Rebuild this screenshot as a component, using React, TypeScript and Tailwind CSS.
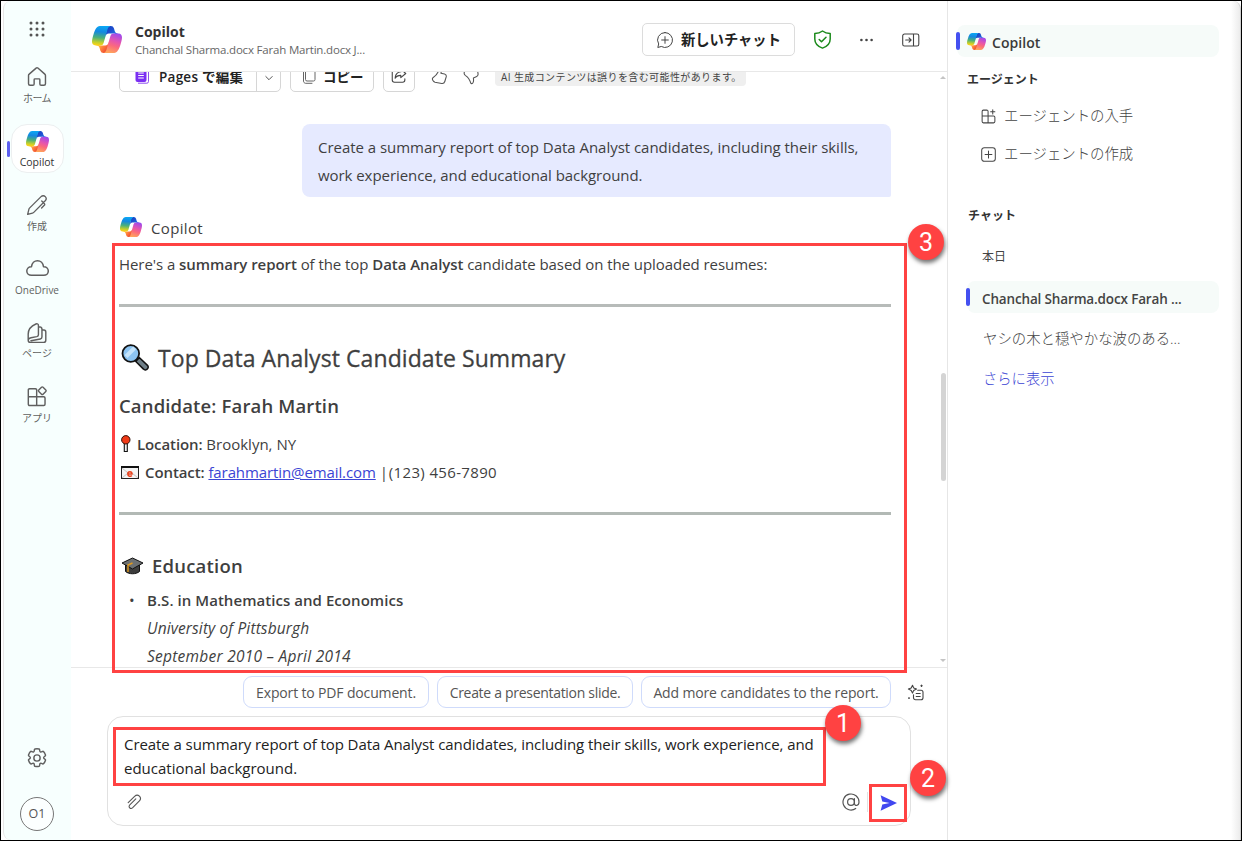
import { useId, type ReactNode } from "react";

function CopilotLogo({ className }: { className: string }) {
  const id = useId();
  return (
    <svg className={className} viewBox="2 4 44 40" preserveAspectRatio="none">
      <defs>
        <linearGradient id={id + "a"} x1="38" y1="18" x2="26" y2="5" gradientUnits="userSpaceOnUse">
          <stop offset="0" stopColor="#1a7fe8" />
          <stop offset="0.6" stopColor="#1f4fd0" />
          <stop offset="1" stopColor="#1647c4" />
        </linearGradient>
        <linearGradient id={id + "b"} x1="10" y1="32" x2="24" y2="43" gradientUnits="userSpaceOnUse">
          <stop offset="0" stopColor="#ffc83d" />
          <stop offset="0.5" stopColor="#ff7a3c" />
          <stop offset="1" stopColor="#e8402f" />
        </linearGradient>
        <linearGradient id={id + "c"} x1="16" y1="4" x2="13" y2="33" gradientUnits="userSpaceOnUse">
          <stop offset="0" stopColor="#0aa8f5" />
          <stop offset="0.3" stopColor="#1488e0" />
          <stop offset="0.6" stopColor="#4bb07a" />
          <stop offset="0.85" stopColor="#c5cf2c" />
          <stop offset="1" stopColor="#ffd314" />
        </linearGradient>
        <linearGradient id={id + "d"} x1="40" y1="15" x2="30" y2="44" gradientUnits="userSpaceOnUse">
          <stop offset="0" stopColor="#9a48f0" />
          <stop offset="0.4" stopColor="#e455b0" />
          <stop offset="0.65" stopColor="#fb6a7c" />
          <stop offset="1" stopColor="#ffa45c" />
        </linearGradient>
      </defs>
      <path fill={`url(#${id}a)`} d="M34.142 7.325A4.63 4.63 0 0 0 29.7 4H28.35a4.63 4.63 0 0 0-4.554 3.794L21.48 20.407l.575-1.965a4.63 4.63 0 0 1 4.444-3.33h7.853l3.294 1.282 3.175-1.283h-.926a4.63 4.63 0 0 1-4.443-3.325z" />
      <path fill={`url(#${id}b)`} d="M14.33 40.656A4.63 4.63 0 0 0 18.779 44h2.87a4.63 4.63 0 0 0 4.629-4.51l.312-12.163-.654 2.233a4.63 4.63 0 0 1-4.443 3.329h-7.919l-2.823-1.531-3.056 1.53h.91a4.63 4.63 0 0 1 4.448 3.344z" />
      <path fill={`url(#${id}c)`} d="M29.5 4H13.46c-4.583 0-7.332 6.057-9.165 12.113C2.123 23.29-.72 32.885 7.503 32.885h6.926a4.63 4.63 0 0 0 4.456-3.36l5.917-20.807C25.6 5.9 27.3 4 29.5 4z" />
      <path fill={`url(#${id}d)`} d="M18.498 44h16.04c4.582 0 7.332-6.058 9.165-12.115 2.171-7.177 5.013-16.775-3.208-16.775h-6.926a4.63 4.63 0 0 0-4.457 3.358l-5.915 20.81C22.4 42.1 20.7 44 18.498 44z" />
    </svg>
  );
}

function Icon({ className, children, box = "0 0 20 20", width = 1 }: { className: string; children: ReactNode; box?: string; width?: number }) {
  return (
    <svg className={className} viewBox={box} fill="none" stroke="currentColor" strokeWidth={width} strokeLinecap="round" strokeLinejoin="round">
      {children}
    </svg>
  );
}

function NavItem({ label, labelClass, children }: { label: string; labelClass: string; children: ReactNode }) {
  return (
    <div className="flex h-16 w-full flex-col items-center text-[#5f5f5f]">
      <div className="flex h-6 items-center justify-center">{children}</div>
      <div className={"flex h-4 items-center whitespace-nowrap " + labelClass}>{label}</div>
    </div>
  );
}

function Sidebar() {
  return (
    <nav className="ml-0.5 flex w-[68px] shrink-0 flex-col items-center rounded-l-lg border-l border-[#e6e6e6] bg-[#f7fffe] pr-px">
      <svg className="mt-5 size-4" viewBox="0 0 16 16" fill="#555">
        {[2, 8, 14].map((y) => [2, 8, 14].map((x) => <circle key={x + "-" + y} cx={x} cy={y} r="1.5" />))}
      </svg>
      <div className="mt-[26px] flex w-full flex-col">
        <NavItem label="ホーム" labelClass="text-[10px] mt-[3px] tracking-[-0.5px]">
          <Icon className="mt-[3px] size-[22px]" width={1.3}>
            <path d="M9.2 1.9a1.2 1.2 0 0 1 1.6 0l6.3 5.5c.4.35.6.8.6 1.3v7.4c0 .8-.6 1.4-1.4 1.4h-2.5c-.7 0-1.2-.5-1.2-1.2v-3.9c0-.4-.3-.7-.7-.7H8.1c-.4 0-.7.3-.7.7v3.9c0 .7-.5 1.2-1.2 1.2H3.7c-.8 0-1.4-.6-1.4-1.4V8.700c0-.5.2-1 .6-1.300z" />
          </Icon>
        </NavItem>
        <div className="relative flex h-16 w-full justify-center">
          <div className="absolute top-[14px] left-[3px] h-4 w-[3px] rounded-sm bg-[#5b5fef]" />
          <div className="-mt-[3px] flex h-[49px] w-[53px] flex-col items-center rounded-2xl border border-[#eceff0] bg-white">
            <CopilotLogo className="mt-[6px] h-[21px] w-[23px]" />
            <div className="mt-px text-[10.5px] leading-[18px] text-[#333]">Copilot</div>
          </div>
        </div>
        <NavItem label="作成" labelClass="text-[10px] mt-[3px]">
          <Icon className="mt-[3px] size-[22px]" width={1.2}>
            <path d="M1.5 18.500l1.100-4.500c.15-.6.4-1 .8-1.400L13.7 2.400c1.100-1.100 2.800-1.100 3.800 0s1.100 2.700 0 3.800L7.300 16.500c-.4.400-.9.700-1.400.8zM14.300 6.300l2.300 2.300c.5.500.5 1.200 0 1.700l-2.400 2.400" />
          </Icon>
        </NavItem>
        <NavItem label="OneDrive" labelClass="text-[10px] mt-[3px]">
          <Icon className="mt-[2px] h-[18px] w-[25px]" box="0 0 24 18" width={1.5}>
            <path d="M6 16.300h12.300c2.500 0 4.500-1.800 4.500-4.300 0-2.400-1.900-4.300-4.400-4.300h-.4C17.600 4.200 15.100 1.700 12 1.700S6.400 4.200 6 7.700h-.3c-2.500 0-4.400 1.900-4.400 4.300 0 2.500 2.100 4.300 4.700 4.300z" />
          </Icon>
        </NavItem>
        <NavItem label="ページ" labelClass="text-[10px] mt-0.5">
          <Icon className="mt-[3px] size-[22px]" width={1.3}>
            <path d="M2 16.500V11C2 7 5 3.500 9 1.800c1.300-.5 2.300.1 2.300 1.400v8.300c0 1-.6 1.600-1.500 1.800l-5.300 1C2.900 14.600 2 15.300 2 16.500c0 1.200.9 2 2 2h12c1.200 0 2-.8 2-2V8.800c0-1.200-1.200-1.700-3.500-1.700M11.300 4.300c2 0 3.200.7 3.200 2v7.300c0 1-.5 1.600-1.500 1.800L4.500 17" />
          </Icon>
        </NavItem>
        <NavItem label="アプリ" labelClass="text-[10px] mt-[3px]">
          <Icon className="mt-[3px] size-[22px]" width={1.3}>
            <path d="M9.700 9.800V3.600c0-.6-.5-1.100-1.100-1.100H3.200c-.6 0-1.100.5-1.100 1.100v6.200zm0 0v8H3.200c-.6 0-1.100-.5-1.100-1.100V9.800zm0 0h6.500c.6 0 1.100.5 1.100 1.100v5.800c0 .6-.5 1.100-1.100 1.100H9.700zM14.100 1.100c.4-.4 1-.4 1.400 0l2.500 2.500c.4.4.4 1 0 1.400l-2.500 2.500c-.4.4-1 .4-1.400 0L11.600 5c-.4-.4-.4-1 0-1.400z" />
          </Icon>
        </NavItem>
      </div>
      <div className="mt-auto mb-[9px] flex flex-col items-center gap-[29px] text-[#5f5f5f]">
        <Icon className="size-5" width={1.5} box="1.5 1.5 21 21">
          <circle cx="12" cy="12" r="3.3" />
          <path d="M12 2.300c.7 0 1.400.1 2.100.25.3.07.5.3.6.600l.2 1.500c.1.800.9 1.300 1.700 1l1.400-.6c.3-.1.600-.05.800.2a9.700 9.700 0 0 1 2.100 3.700c.1.300 0 .6-.2.800l-1.200.9c-.7.500-.7 1.500 0 2l1.200.9c.2.200.3.500.2.800a9.700 9.700 0 0 1-2.100 3.700c-.2.200-.5.300-.8.200l-1.400-.6c-.8-.3-1.600.1-1.700 1l-.2 1.500c0 .3-.3.500-.6.600a9.500 9.500 0 0 1-4.200 0c-.3-.1-.5-.3-.6-.6l-.2-1.500c-.1-.9-.9-1.300-1.700-1l-1.400.6c-.3.100-.6 0-.8-.2a9.700 9.700 0 0 1-2.100-3.700c-.1-.3 0-.6.2-.8l1.200-.9c.7-.5.7-1.500 0-2l-1.200-.9c-.2-.2-.3-.5-.2-.8a9.700 9.700 0 0 1 2.100-3.700c.2-.25.5-.3.8-.2l1.400.6c.8.3 1.600-.2 1.700-1l.2-1.500c.1-.3.3-.5.6-.6.7-.15 1.400-.25 2.100-.25z" />
        </Icon>
        <div className="flex size-[34px] items-center justify-center rounded-full border-[1.5px] border-[#777] bg-white/60 text-[12.5px] text-[#555]">O1</div>
      </div>
    </nav>
  );
}

function Header() {
  return (
    <header className="flex h-[71px] shrink-0 items-center border-b border-[#e8e8e8] pr-[27px] pl-[21px]">
      <CopilotLogo className="mt-[7px] h-[27px] w-[30px]" />
      <div className="mt-[7px] ml-[13px] flex flex-col">
        <div className="text-[14px] leading-5 font-bold text-[#333]">Copilot</div>
        <div className="text-[11.5px] leading-4 tracking-[-0.19px] whitespace-nowrap text-[#666]">Chanchal Sharma.docx Farah Martin.docx J...</div>
      </div>
      <div className="mt-[7px] ml-auto flex items-center">
        <button className="flex h-[33px] w-[153px] items-center rounded-[5px] border border-[#dcdcdc] pl-[13px] text-[#222]">
          <Icon className="size-[18px] text-[#444]" width={1.1}>
            <path d="M10 1.700a8.300 8.300 0 1 1-4.100 15.500L2 18.300l1-3.900A8.300 8.300 0 0 1 10 1.700zM10 6.300v7.400M6.300 10h7.400" />
          </Icon>
          <span className="ml-[7px] text-[14.3px] font-bold whitespace-nowrap">新しいチャット</span>
        </button>
        <Icon className="ml-[18px] size-[19px] text-[#1b8a1b]" width={1.5} box="1 0.5 18 19">
          <path d="M10 1.500c2.200 1.600 4.700 2.400 7.700 2.600v5.300c0 4.300-2.600 7.300-7.700 9.200-5.100-1.900-7.700-4.900-7.700-9.200V4.100C5.300 3.900 7.800 3.100 10 1.500zM6.700 10l2.300 2.300 4.500-4.600" />
        </Icon>
        <svg className="ml-[26px] h-4 w-4" viewBox="0 0 16 16" fill="#444">
          <circle cx="3.400" cy="8" r="1.300" />
          <circle cx="8.500" cy="8" r="1.300" />
          <circle cx="13.600" cy="8" r="1.300" />
        </svg>
        <Icon className="ml-[28px] h-[14px] w-[18px] text-[#444]" box="0 0 18 14" width={1.1}>
          <path d="M2.500 1h12.500c1 0 1.800.8 1.800 1.800v8.400c0 1-.8 1.800-1.800 1.800H2.500c-1 0-1.800-.8-1.800-1.800V2.800C.7 1.800 1.500 1 2.500 1zM11.500 1v12M3.700 7h5.200M7 4.900L9.100 7 7 9.100" />
        </Icon>
      </div>
    </header>
  );
}

function Toolbar() {
  return (
    <div className="-mt-3 flex h-8 items-center text-[#222]">
      <div className="flex h-8 w-[162px] items-stretch rounded-[5px] border border-[#d6d6d6]">
        <div className="flex w-[137px] items-center border-r border-[#d6d6d6] pl-[15px]">
          <svg className="h-[15px] w-[15px]" viewBox="0 0 15 15" fill="none">
            <rect x="0.5" y="0" width="11" height="13" rx="2" fill="#7b2ff2" />
            <path d="M3.200 4h5.600M3.200 6.500h5.600M3.200 9h5.600" stroke="#fff" strokeWidth="1.100" />
            <path d="M13.500 3v9.500a1.700 1.700 0 0 1-1.700 1.700H3" stroke="#8d4df0" strokeWidth="1" />
          </svg>
          <span className="ml-[9px] pt-0.5 text-[13.5px] font-semibold tracking-[0.25px] whitespace-nowrap">Pages で編集</span>
        </div>
        <div className="flex flex-1 items-center justify-center">
          <Icon className="mt-1 h-2 w-2 text-[#555]" box="0 0 8 8"><path d="M.8 2.500L4 5.700l3.200-3.200" /></Icon>
        </div>
      </div>
      <div className="ml-[9px] flex h-8 w-[84px] items-center rounded-[5px] border border-[#d6d6d6] pl-[11px]">
        <Icon className="size-[15px] text-[#666]" box="0 0 15 15"><rect x="3.5" y="0.5" width="9.5" height="11.5" rx="1.5" /><path d="M1.500 3v9c0 1.200.9 2.300 2.200 2.300H10" /></Icon>
        <span className="ml-[6px] pt-0.5 text-[13.5px] font-bold">コピー</span>
      </div>
      <div className="ml-[9px] flex h-8 w-8 items-center justify-center rounded-[5px] border border-[#d6d6d6] text-[#444]">
        <Icon className="size-[18px]" width={1.2}>
          <path d="M8 3.500H5A2.500 2.500 0 0 0 2.500 6v8.500A2.500 2.500 0 0 0 5 17h9a2.500 2.500 0 0 0 2.500-2.500V13M12 2.500l5.500 4.700-5.500 4.700V9.300c-3 0-5 .8-6.300 3.200.3-4.300 2.500-6.700 6.300-7.200z" />
        </Icon>
      </div>
      <Icon className="ml-4 h-[18px] w-[17px] text-[#555]" box="0 0 17 18" width={1.1}>
        <path d="M9.500 1c1.200.5 1.500 1.800 1 3.200L9.900 6.200l3.600.8c1.500.4 2 1.500 1.700 2.900l-1.400 4.600c-.5 1.600-1.500 2.300-3.100 2L4 15.200c-1-.3-1.700-1-2.200-1.900-.6-1.200-.4-2.500.7-3.100C5.500 8.200 7.300 5.500 8 2.200c.2-.9.800-1.400 1.500-1.200z" />
      </Icon>
      <Icon className="ml-[15px] h-[18px] w-[17px] text-[#555]" box="0 0 17 18" width={1.1}>
        <path d="M7.800 16.200c.4.600 1.300.5 1.900 0 1-.9 1-2.900.7-5.200l2.800-1.200c1.300-.5 2-1.400 1.900-2.700l-.5-3.300C14.300 2 13 1.200 11.500 1.500L4 3C2.500 3.300 1.500 4.200 1.200 5.600c-.3 1.300.2 2.200 1.400 3 2.700 1.700 4.100 4.200 5.200 7.600z" />
      </Icon>
      <div className="ml-[15px] flex h-[20px] w-[251px] items-center rounded-[4px] bg-[#efefef] pt-0.5 pl-[6px] text-[10px] tracking-[0.4px] whitespace-nowrap text-[#444]">
        AI 生成コンテンツは誤りを含む可能性があります。
      </div>
    </div>
  );
}

function Conversation() {
  return (
    <section className="relative h-[595px] shrink-0 overflow-hidden pr-[56px] pl-12 text-[15px] text-[#3f3f3f]">
      <Toolbar />
      <div className="mt-8 ml-auto h-[73px] w-[589px] rounded-lg rounded-br-xs bg-[#e6eaff] pt-[9px] pl-4 leading-7 whitespace-nowrap">
        <p className="tracking-[-0.03px]">Create a summary report of top Data Analyst candidates, including their skills,</p>
        <p className="tracking-[-0.06px]">work experience, and educational background.</p>
      </div>
      <div className="mt-[17px] flex h-7 items-center">
        <CopilotLogo className="mb-[2px] ml-px h-[20px] w-[22px]" />
        <span className="ml-[9px] tracking-[0.35px]">Copilot</span>
      </div>
      <p className="mt-2 h-7 leading-7 tracking-[-0.06px] whitespace-nowrap">
        Here's a <b className="font-semibold">summary report</b> of the top <b className="font-semibold">Data Analyst</b> candidate based on the uploaded resumes:
      </p>
      <hr className="mt-[26px] h-[3px] border-0 bg-[#b7bbb9]" />
      <h2 className="mt-[37px] flex h-7 items-center text-[23px] whitespace-nowrap">
        <svg className="ml-[2px] size-[28px]" viewBox="0 0 28 28">
          <path d="M16.500 15.500l2-1.800 8 7.700c1.600 1.600.2 4.200-2 4.500-.8.100-1.500-.2-2-.8l-7.700-7.600z" fill="#6f7f88" stroke="#111" strokeWidth="1.500" />
          <circle cx="9.800" cy="9.500" r="8.300" fill="#8cc4f2" stroke="#111" strokeWidth="1.800" />
          <path d="M5 12.500L13.500 4" stroke="#c5e4fb" strokeWidth="4" />
        </svg>
        <span className="ml-[9px] tracking-[0.07px] [-webkit-text-stroke:0.3px_#3f3f3f]">Top Data Analyst Candidate Summary</span>
      </h2>
      <h3 className="mt-[20px] h-7 text-[18.5px] leading-7 font-semibold tracking-[0.14px] whitespace-nowrap">Candidate: Farah Martin</h3>
      <div className="mt-[10px] flex h-7 items-center whitespace-nowrap">
        <svg className="ml-[2px] h-[18px] w-[10px]" viewBox="0 0 10 18">
          <path d="M3.300 8h3v8.500h-3z" fill="#eee" stroke="#111" strokeWidth="1.100" />
          <circle cx="4.800" cy="4.800" r="4.200" fill="#f03a17" stroke="#301008" strokeWidth="1" />
        </svg>
        <p className="ml-[6px]"><b className="font-semibold tracking-[-0.1px]">Location:</b> Brooklyn, NY</p>
      </div>
      <div className="flex h-7 items-center whitespace-nowrap">
        <svg className="ml-[2px] h-[13px] w-[18px]" viewBox="0 0 18 13">
          <rect x="0.5" y="0.5" width="17" height="12" fill="#f4f4f4" stroke="#222" />
          <path d="M0 1h18" stroke="#111" strokeWidth="2" />
          <path d="M1 12l6-5M17 12l-6-5M1 2l6 5" stroke="#aaa" strokeWidth="0.7" />
          <path d="M6.800 8h4.200c0-3-4.200-3-4.200 0 0 2.600 2.900 2.900 4 1.500" fill="none" stroke="#e8401c" strokeWidth="1.500" />
        </svg>
        <p className="ml-[6px]">
          <b className="font-semibold tracking-[-0.1px]">Contact:</b>{" "}
          <a className="tracking-[-0.1px] text-[#3b45d4] underline">farahmartin@email.com</a> | <span className="-ml-[3px] tracking-[0.35px]">(123) 456-7890</span>
        </p>
      </div>
      <hr className="mt-[26px] h-[3px] border-0 bg-[#b2b9b5]" />
      <h3 className="mt-[37px] flex h-7 items-center text-[18.5px] font-semibold">
        <svg className="ml-[2px] h-[18px] w-[23px]" viewBox="0 0 23 18">
          <path d="M4.500 8v6.500c3.500 3 10.500 3 14 0V8z" fill="#3c3c3c" stroke="#111" />
          <path d="M11.500 1L22 6l-10.500 6L1 6z" fill="#6c7072" stroke="#111" strokeLinejoin="round" />
          <path d="M11.500 6L7 8v7" fill="none" stroke="#e29a1c" strokeWidth="1.400" />
        </svg>
        <span className="ml-2 tracking-[0.2px]">Education</span>
      </h3>
      <ul className="mt-[6px] leading-7 whitespace-nowrap">
        <li className="flex">
          <span className="w-[28px] pl-[10px]">•</span>
          <div>
            <b className="font-semibold tracking-[0.05px]">B.S. in Mathematics and Economics</b>
            <p className="text-[15.5px] leading-7 tracking-[0.12px] italic">University of Pittsburgh</p>
            <p className="text-[15.5px] leading-7 tracking-[0.25px] italic">September 2010 – April 2014</p>
          </div>
        </li>
      </ul>
      <div className="absolute top-[4px] right-[1px] h-0 w-0 border-x-[3px] border-b-[3px] border-x-transparent border-b-[#c4c4c4]" />
      <div className="absolute top-[301px] right-[1px] h-[108px] w-[5px] rounded-full bg-[#d4d4d4]" />
      <div className="absolute right-[1px] bottom-[5px] h-0 w-0 border-x-[3px] border-t-[3px] border-x-transparent border-t-[#c4c4c4]" />
    </section>
  );
}

function Composer() {
  return (
    <footer className="flex flex-1 flex-col border-t border-[#e8e8e8] px-9 pt-2">
      <div className="flex items-center justify-end gap-2 text-[14px] whitespace-nowrap text-[#555]">
        <button className="h-8 w-[186px] rounded-[9px] border border-[#cfdbfb] tracking-[-0.15px]">Export to PDF document.</button>
        <button className="h-8 w-[196px] rounded-[9px] border border-[#cfdbfb] tracking-[-0.3px]">Create a presentation slide.</button>
        <button className="h-8 w-[250px] rounded-[9px] border border-[#cfdbfb] tracking-[-0.14px]">Add more candidates to the report.</button>
        <Icon className="mr-[-13px] ml-2 size-[17px] text-[#444]" box="0 0 17 17" width={1.1}>
          <path d="M5.500 1.200l1.200 2.700 2.800 1.200-2.800 1.300-1.200 2.700-1.300-2.700L1.400 5.100l2.800-1.200zM10.700 6.300h3.300c1.100 0 2 .9 2 2v5.500c0 1.100-.9 2-2 2H8.500c-1.100 0-2-.9-2-2v-3M9.200 9.500h4M9.200 12.500h4M14.500 1v1.500M13.800 1.700h1.500M1.500 14h1M2 13.500v1" />
        </Icon>
      </div>
      <div className="mt-2 flex h-[110px] w-[804px] flex-col rounded-2xl border border-[#e1e1e1] pt-[15px] pr-3 pl-4 text-[15px] text-[#222]">
        <p className="leading-6 tracking-[-0.07px] whitespace-nowrap">Create a summary report of top Data Analyst candidates, including their skills, work experience, and</p>
        <p className="leading-6">educational background.</p>
        <div className="mt-3 flex h-5 items-center text-[#555]">
          <Icon className="ml-px size-[17px] -translate-y-px" box="0 0 17 17" width={1.1}>
            <path d="M2.200 8.700L8.600 2.300c1.500-1.400 3.500-1.400 4.800-.1s1.300 3.300 0 4.700l-6.700 6.800c-1 .9-2.200.9-3 .1s-.8-2 .1-2.900l6-6.100" transform="translate(1 1)" />
          </Icon>
          <Icon className="mr-[7px] ml-auto size-[18px]" box="0 0 18 18" width={1.2}>
            <circle cx="9" cy="9" r="3.400" />
            <path d="M12.400 5.700v4.600c0 3.300 4.600 2.900 4.600-1.300a8 8 0 1 0-3.300 6.500" />
          </Icon>
          <div className="mr-3 h-5 w-px bg-[#e2e2e2]" />
          <svg className="mt-px mr-px h-4 w-[17px]" viewBox="0 0 17 16" fill="#4147f0">
            <path d="M.6.300L17 8 .6 15.700 2.300 9.500 9.500 8 2.300 6.500z" />
          </svg>
        </div>
      </div>
    </footer>
  );
}

function HistoryPanel() {
  return (
    <aside className="flex w-[284px] shrink-0 flex-col border-l border-[#e6e6e6] pt-6 pr-3 pl-2 text-[#444]">
      <div className="flex h-8 items-center">
        <div className="z-10 h-[18px] w-1 rounded-sm bg-[#4450f0]" />
        <div className="-ml-[3px] flex h-8 flex-1 items-center rounded-lg bg-[#f6fbf9] pl-[10px]">
          <CopilotLogo className="h-[17px] w-[19px]" />
          <span className="pt-[2px] pl-[6px] text-[14px] font-semibold tracking-[0.05px] text-[#3a3a3a]">Copilot</span>
        </div>
      </div>
      <div className="mt-[13px] ml-[11px] h-5 text-[12px] leading-5 font-bold text-[#333]">エージェント</div>
      <div className="mt-[14px] ml-[24px] flex h-6 items-center text-[14.4px] font-light">
        <Icon className="size-[17px]" width={1.2}>
          <path d="M9.500 9.500V4c0-.8-.6-1.500-1.500-1.500H4C3.100 2.500 2.500 3.200 2.500 4v5.500zm0 0v8H4c-.9 0-1.500-.7-1.500-1.500V9.500zm0 0H16c.9 0 1.500.7 1.500 1.500v5c0 .8-.6 1.500-1.500 1.500H9.500zM15 2v5M12.500 4.500h5" />
        </Icon>
        <span className="ml-[7px]">エージェントの入手</span>
      </div>
      <div className="mt-[14px] ml-[24px] flex h-6 items-center text-[14.4px] font-light">
        <Icon className="size-[17px]" width={1.2}>
          <rect x="2" y="2" width="16" height="16" rx="3" />
          <path d="M10 6v8M6 10h8" />
        </Icon>
        <span className="ml-[7px]">エージェントの作成</span>
      </div>
      <div className="mt-[40px] ml-[12px] h-5 text-[12px] leading-5 font-bold text-[#333]">チャット</div>
      <div className="mt-[21px] ml-[26px] h-5 text-[12px] leading-5">本日</div>
      <div className="mt-[14px] ml-[10px] flex h-8 items-center">
        <div className="z-10 h-[18px] w-1 rounded-sm bg-[#4450f0]" />
        <div className="-ml-[3px] flex h-8 flex-1 items-center rounded-lg bg-[#f6fbf9] pt-1 pl-[15px] text-[13.5px] font-semibold tracking-[-0.15px] whitespace-nowrap">
          Chanchal Sharma.docx Farah ...
        </div>
      </div>
      <div className="mt-[14px] ml-[27px] h-6 text-[14.4px] leading-6 font-light whitespace-nowrap">ヤシの木と穏やかな波のある...</div>
      <div className="mt-[16px] ml-[27px] h-6 text-[14.3px] leading-6 font-light text-[#3b45d4]">さらに表示</div>
    </aside>
  );
}

function Step({ n, className }: { n: number; className: string }) {
  return (
    <div className={"absolute flex size-9 items-center justify-center rounded-full bg-[#ff4242] pt-0.5 font-[Roboto] text-[25px] text-white shadow-[1px_3px_4px_rgba(0,0,0,0.55)] " + className}>
      {n}
    </div>
  );
}

export default function App() {
  return (
    <div className="relative flex h-[841px] w-[1242px] overflow-hidden border border-black bg-white font-['Open_Sans','Noto_Sans_CJK_JP',sans-serif]">
      <Sidebar />
      <main className="flex w-[876px] shrink-0 flex-col">
        <Header />
        <Conversation />
        <Composer />
      </main>
      <HistoryPanel />
      <div className="flex-1 rounded-tr-lg border-r border-[#cfcfcf] bg-linear-to-r from-white to-[#ececec]" />
      <div className="absolute top-[242px] left-[111px] h-[430px] w-[795px] border-3 border-[#ff4242]" />
      <div className="absolute top-[726px] left-[112px] h-[59px] w-[713px] border-3 border-[#ff4242]" />
      <div className="absolute top-[783px] left-[868px] h-[38px] w-[38px] border-3 border-[#ff4242]" />
      <Step n={3} className="top-[223px] left-[907px]" />
      <Step n={1} className="top-[704px] left-[824px]" />
      <Step n={2} className="top-[759px] left-[909px]" />
    </div>
  );
}
